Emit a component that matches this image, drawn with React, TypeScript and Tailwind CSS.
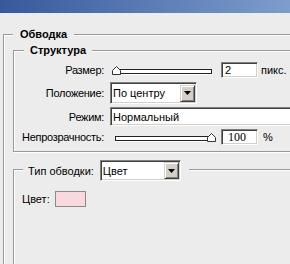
import { FC, ReactElement, ReactNode } from "react";

const sunken =
  "border border-t-[#808080] border-l-[#808080] border-b-white border-r-white shadow-[inset_1px_1px_0_#404040,inset_-1px_-1px_0_#d4d0c8] bg-white";

const DropButton: FC = (): ReactElement => (
  <div className="ml-auto mr-[1px] flex h-[17px] w-[15px] shrink-0 items-center justify-center border border-t-[#d4d0c8] border-l-[#d4d0c8] border-b-[#404040] border-r-[#404040] bg-[#d4d0c8] shadow-[inset_1px_1px_0_#fff,inset_-1px_-1px_0_#808080]">
    <svg width="7" height="4" viewBox="0 0 7 4">
      <polygon points="0,0 7,0 3.5,4" fill="#000" />
    </svg>
  </div>
);

const Select: FC<{ value: string; className: string }> = ({ value, className }): ReactElement => (
  <div className={`flex items-center ${sunken} ${className}`}>
    <span className="pl-[2px]">{value}</span>
    <DropButton />
  </div>
);

const Slider: FC<{ thumb: number }> = ({ thumb }): ReactElement => (
  <div className="relative h-[16px] w-[103px] shrink-0">
    <div className="absolute left-[5px] right-[1px] top-[7px] h-[5px] border border-[#222] bg-white shadow-[0_1px_0_#fff]" />
    <svg
      className="absolute top-[4px]"
      style={{ left: thumb }}
      width="9"
      height="9"
      viewBox="0 0 9 9"
    >
      <polygon points="4.5,0.5 8.5,4.5 8.5,8.5 0.5,8.5 0.5,4.5" fill="#fff" stroke="#333" strokeWidth="1" />
    </svg>
  </div>
);

const Row: FC<{ label: string; className: string; children: ReactNode }> = ({
  label,
  className,
  children,
}): ReactElement => (
  <div className={`flex items-center ${className}`}>
    <span className="w-[90px] shrink-0 whitespace-nowrap text-right tracking-[-0.3px]">{label}</span>
    <div className="ml-[6px] flex h-full items-center">{children}</div>
  </div>
);

export default function App(): ReactElement {
  return (
    <div className="flex h-[264px] w-[290px] flex-col overflow-hidden bg-[#ececec] font-['Liberation_Sans',Arial,sans-serif] text-[11px] leading-[14px] text-black">
      <div className="h-[13px] w-full shrink-0 bg-gradient-to-r from-[#37599b] to-[#7e9dcd]" />

      {/* Обводка */}
      <div className="ml-[3px] mt-[21px] flex w-[320px] flex-1 flex-col border-t border-l border-[#999] shadow-[inset_1px_1px_0_#fff]">
        <div className="-mt-[8px] ml-[9px] self-start bg-[#ececec] px-[7px] font-bold">Обводка</div>

        {/* Структура */}
        <div className="ml-[9px] mt-[9px] flex flex-col border-t border-l border-b border-[#999] pb-[6px] shadow-[inset_1px_1px_0_#fff,0_1px_0_#fff]">
          <div className="-mt-[8px] ml-[10px] self-start bg-[#ececec] px-[6px] font-bold">Структура</div>

          <Row label="Размер:" className="mt-[5px] h-[16px]">
            <Slider thumb={2} />
            <div className={`ml-[8px] flex h-[16px] w-[37px] items-center pl-[3px] ${sunken}`}>2</div>
            <span className="ml-[3px]">пикс.</span>
          </Row>

          <Row label="Положение:" className="mt-[4px] h-[22px]">
            <Select value="По центру" className="h-[22px] w-[87px]" />
          </Row>

          <Row label="Режим:" className="mt-[3px] h-[19px]">
            <div className={`flex h-[19px] w-[200px] items-center pl-[2px] ${sunken}`}>Нормальный</div>
          </Row>

          <Row label="Непрозрачность:" className="mt-[3px] h-[16px]">
            <Slider thumb={97} />
            <div className={`ml-[8px] flex h-[16px] w-[37px] items-center pl-[6px] font-['Liberation_Serif',serif] text-[12px] ${sunken}`}>
              100
            </div>
            <span className="ml-[5px]">%</span>
          </Row>
        </div>

        {/* Тип обводки */}
        <div className="ml-[9px] mt-[17px] flex flex-1 flex-col border-t border-l border-[#999] shadow-[inset_1px_1px_0_#fff]">
          <div className="-mt-[10px] ml-[9px] flex h-[21px] items-center self-start bg-[#ececec] pl-[5px] pr-[8px]">
            <span>Тип обводки:</span>
            <Select value="Цвет" className="ml-[6px] h-[21px] w-[81px]" />
          </div>

          <div className="ml-[8px] mt-[10px] flex h-[16px] items-center">
            <span>Цвет:</span>
            <div className="ml-[5px] h-[16px] w-[31px] border border-[#8a8a8a] bg-[#f7d9de]" />
          </div>
        </div>
      </div>
    </div>
  );
}
